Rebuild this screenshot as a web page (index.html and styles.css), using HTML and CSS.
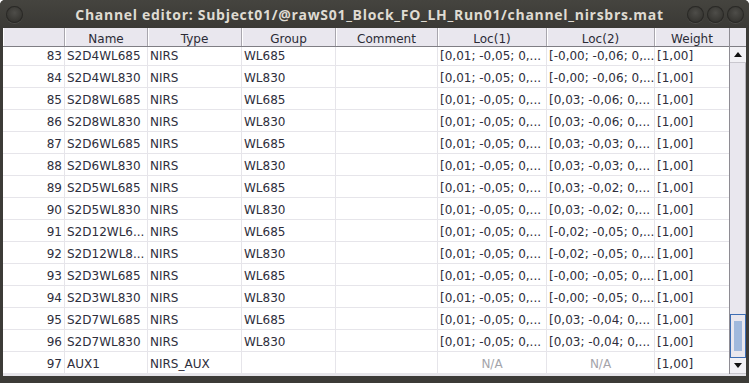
FILE: index.html
```html
<!DOCTYPE html>
<html lang="en">
<head>
    <meta charset="UTF-8">
    <title>Channel editor</title>
    <link rel="stylesheet" href="styles.css">
</head>
<body>

<div class="window">
    <!-- Barra de título -->
    <div class="titlebar">
        <span class="wbtn wbtn-left"></span>
        <span class="title">Channel editor: Subject01/@rawS01_Block_FO_LH_Run01/channel_nirsbrs.mat</span>
        <div class="wbtns">
            <span class="wbtn"></span>
            <span class="wbtn"></span>
            <span class="wbtn"></span>
        </div>
    </div>

    <div class="frame">
        <div class="table">
            <div class="thead">
                <div class="th"></div>
                <div class="th">Name</div>
                <div class="th">Type</div>
                <div class="th">Group</div>
                <div class="th">Comment</div>
                <div class="th">Loc(1)</div>
                <div class="th">Loc(2)</div>
                <div class="th">Weight</div>
            </div>
            <div class="tbody">
                <div class="rows">
                    <div class="tr"><div class="td num">83</div><div class="td">S2D4WL685</div><div class="td">NIRS</div><div class="td">WL685</div><div class="td"></div><div class="td">[0,01; -0,05; 0,...</div><div class="td">[-0,00; -0,06; 0,...</div><div class="td">[1,00]</div></div>
                    <div class="tr"><div class="td num">84</div><div class="td">S2D4WL830</div><div class="td">NIRS</div><div class="td">WL830</div><div class="td"></div><div class="td">[0,01; -0,05; 0,...</div><div class="td">[-0,00; -0,06; 0,...</div><div class="td">[1,00]</div></div>
                    <div class="tr"><div class="td num">85</div><div class="td">S2D8WL685</div><div class="td">NIRS</div><div class="td">WL685</div><div class="td"></div><div class="td">[0,01; -0,05; 0,...</div><div class="td">[0,03; -0,06; 0,...</div><div class="td">[1,00]</div></div>
                    <div class="tr"><div class="td num">86</div><div class="td">S2D8WL830</div><div class="td">NIRS</div><div class="td">WL830</div><div class="td"></div><div class="td">[0,01; -0,05; 0,...</div><div class="td">[0,03; -0,06; 0,...</div><div class="td">[1,00]</div></div>
                    <div class="tr"><div class="td num">87</div><div class="td">S2D6WL685</div><div class="td">NIRS</div><div class="td">WL685</div><div class="td"></div><div class="td">[0,01; -0,05; 0,...</div><div class="td">[0,03; -0,03; 0,...</div><div class="td">[1,00]</div></div>
                    <div class="tr"><div class="td num">88</div><div class="td">S2D6WL830</div><div class="td">NIRS</div><div class="td">WL830</div><div class="td"></div><div class="td">[0,01; -0,05; 0,...</div><div class="td">[0,03; -0,03; 0,...</div><div class="td">[1,00]</div></div>
                    <div class="tr"><div class="td num">89</div><div class="td">S2D5WL685</div><div class="td">NIRS</div><div class="td">WL685</div><div class="td"></div><div class="td">[0,01; -0,05; 0,...</div><div class="td">[0,03; -0,02; 0,...</div><div class="td">[1,00]</div></div>
                    <div class="tr"><div class="td num">90</div><div class="td">S2D5WL830</div><div class="td">NIRS</div><div class="td">WL830</div><div class="td"></div><div class="td">[0,01; -0,05; 0,...</div><div class="td">[0,03; -0,02; 0,...</div><div class="td">[1,00]</div></div>
                    <div class="tr"><div class="td num">91</div><div class="td">S2D12WL6...</div><div class="td">NIRS</div><div class="td">WL685</div><div class="td"></div><div class="td">[0,01; -0,05; 0,...</div><div class="td">[-0,02; -0,05; 0,...</div><div class="td">[1,00]</div></div>
                    <div class="tr"><div class="td num">92</div><div class="td">S2D12WL8...</div><div class="td">NIRS</div><div class="td">WL830</div><div class="td"></div><div class="td">[0,01; -0,05; 0,...</div><div class="td">[-0,02; -0,05; 0,...</div><div class="td">[1,00]</div></div>
                    <div class="tr"><div class="td num">93</div><div class="td">S2D3WL685</div><div class="td">NIRS</div><div class="td">WL685</div><div class="td"></div><div class="td">[0,01; -0,05; 0,...</div><div class="td">[-0,00; -0,05; 0,...</div><div class="td">[1,00]</div></div>
                    <div class="tr"><div class="td num">94</div><div class="td">S2D3WL830</div><div class="td">NIRS</div><div class="td">WL830</div><div class="td"></div><div class="td">[0,01; -0,05; 0,...</div><div class="td">[-0,00; -0,05; 0,...</div><div class="td">[1,00]</div></div>
                    <div class="tr"><div class="td num">95</div><div class="td">S2D7WL685</div><div class="td">NIRS</div><div class="td">WL685</div><div class="td"></div><div class="td">[0,01; -0,05; 0,...</div><div class="td">[0,03; -0,04; 0,...</div><div class="td">[1,00]</div></div>
                    <div class="tr"><div class="td num">96</div><div class="td">S2D7WL830</div><div class="td">NIRS</div><div class="td">WL830</div><div class="td"></div><div class="td">[0,01; -0,05; 0,...</div><div class="td">[0,03; -0,04; 0,...</div><div class="td">[1,00]</div></div>
                    <div class="tr"><div class="td num">97</div><div class="td">AUX1</div><div class="td">NIRS_AUX</div><div class="td"></div><div class="td"></div><div class="td na">N/A</div><div class="td na">N/A</div><div class="td">[1,00]</div></div>
                </div>
            </div>
        </div>

        <!-- Barra de desplazamiento -->
        <div class="scroll">
            <div class="scroll-corner"></div>
            <div class="scroll-btn"><span class="arrow-up"></span></div>
            <div class="scroll-track"></div>
            <div class="scroll-thumb"></div>
            <div class="scroll-btn"><span class="arrow-down"></span></div>
        </div>
    </div>
</div>

</body>
</html>
```

FILE: styles.css
```css
body {
    margin: 0;
    padding: 0;
    background-color: #ffffff;
    font-family: "DejaVu Sans", sans-serif;
}
.window {
    width: 749px;
    height: 383px;
    display: flex;
    flex-direction: column;
    background-color: #3c3b37;
    border-radius: 5px 5px 0 0;
    overflow: hidden;
}
.titlebar {
    height: 28px;
    flex: none;
    display: flex;
    align-items: center;
    background: linear-gradient(#45443f, #3a3935);
}
.title {
    flex: 1;
    text-align: center;
    font-family: "Open Sans", sans-serif;
    font-weight: bold;
    font-size: 14px;
    letter-spacing: 0.7px;
    color: #dfdbd2;
    white-space: nowrap;
    padding-left: 29px;
}
.wbtn {
    width: 17px;
    height: 17px;
    border-radius: 50%;
    background: radial-gradient(circle at 50% 40%, #4e4d49 0, #3a3935 55%, #2a2a27 100%);
    box-shadow: inset 0 0 0 1px #2a2926, 0 1px 0 #4d4c48;
    flex: none;
}
.wbtn-left {
    margin-left: 6px;
}
.wbtns {
    display: flex;
    gap: 3px;
    margin-right: 5px;
}
.frame {
    flex: 1;
    display: flex;
    margin: 0 3px 7px 3px;
    background-color: #ffffff;
    border-bottom: 2px solid #e6e5ea;
}
.table {
    width: 727px;
    display: flex;
    flex-direction: column;
    overflow: hidden;
}
.thead, .tr {
    display: grid;
    grid-template-columns: 62px 83px 94px 94px 102px 109px 108px 75px;
}
.thead {
    height: 19px;
    flex: none;
    background-color: #e9e7ee;
    border-bottom: 1px solid #7f7e84;
    box-sizing: border-box;
}
.th {
    font-size: 12px;
    color: #2b2b36;
    text-align: center;
    line-height: 22px;
    height: 18px;
    overflow: hidden;
    border-right: 1px solid #a8a6ad;
    box-shadow: inset 1px 0 0 #ffffff;
}
.tbody {
    flex: 1;
    overflow: hidden;
}
.rows {
    margin-top: -3px;
}
.tr {
    height: 22px;
    box-sizing: border-box;
    border-bottom: 1px solid #e6e5ea;
}
.td {
    font-size: 12px;
    color: #2e2e3c;
    line-height: 25px;
    height: 21px;
    padding-left: 2px;
    white-space: nowrap;
    overflow: hidden;
    border-right: 1px solid #e6e5ea;
}
.td.num {
    text-align: right;
    padding: 0 2px 0 0;
}
.td.na {
    text-align: center;
    color: #a4a4aa;
    padding: 0;
}
.scroll {
    width: 16px;
    display: flex;
    flex-direction: column;
    background-color: #e9e7ee;
    border-left: 1px solid #8e8c93;
}
.scroll-corner {
    height: 19px;
    border-bottom: 1px solid #7f7e84;
    box-sizing: border-box;
}
.scroll-btn {
    height: 15px;
    display: flex;
    align-items: center;
    justify-content: center;
    background-color: #f2f1f5;
    border-bottom: 1px solid #c9c7ce;
}
.scroll-track {
    flex: 1;
    border-right: 1px solid #b5b3ba;
}
.scroll-thumb {
    height: 44px;
    box-sizing: border-box;
    border: 1px solid #3d6db3;
    background-color: #cad7ea;
    background-image: radial-gradient(#6f95cc 0.6px, transparent 0.8px);
    background-size: 2px 2px;
    background-position: 3px 6px;
    background-clip: content-box;
    padding: 6px 3px;
}
.arrow-up, .arrow-down {
    width: 0;
    height: 0;
    border-left: 4px solid transparent;
    border-right: 4px solid transparent;
}
.arrow-up {
    border-bottom: 5px solid #111111;
}
.arrow-down {
    border-top: 5px solid #111111;
}
```
